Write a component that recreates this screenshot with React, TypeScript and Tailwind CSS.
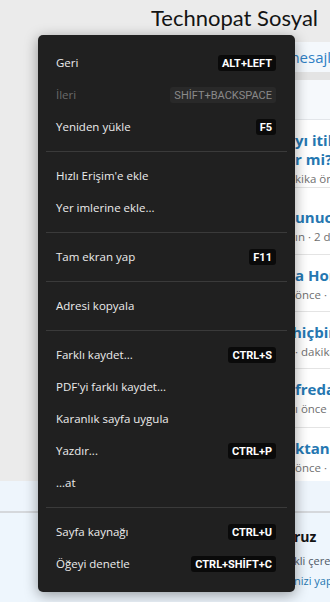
import React from "react";

type Item = { label: string; kbd?: string; disabled?: boolean } | "sep";

const items: Item[] = [
  { label: "Geri", kbd: "ALT+LEFT" },
  { label: "İleri", kbd: "SHİFT+BACKSPACE", disabled: true },
  { label: "Yeniden yükle", kbd: "F5" },
  "sep",
  { label: "Hızlı Erişim'e ekle" },
  { label: "Yer imlerine ekle..." },
  "sep",
  { label: "Tam ekran yap", kbd: "F11" },
  "sep",
  { label: "Adresi kopyala" },
  "sep",
  { label: "Farklı kaydet...", kbd: "CTRL+S" },
  { label: "PDF'yi farklı kaydet..." },
  { label: "Karanlık sayfa uygula" },
  { label: "Yazdır...", kbd: "CTRL+P" },
  { label: "...at" },
  "sep",
  { label: "Sayfa kaynağı", kbd: "CTRL+U" },
  { label: "Öğeyi denetle", kbd: "CTRL+SHİFT+C" },
];

function ContextMenu() {
  return (
    <div className="absolute left-[38px] top-[35px] w-[257px] rounded-[5px] bg-[#202020] py-[12px] shadow-[0_3px_14px_rgba(0,0,0,0.38)] font-['Open_Sans',sans-serif]">
      {items.map((it, i) =>
        it === "sep" ? (
          <div key={i} className="mx-[8px] my-[8px] h-px bg-[#3a3a3a]" />
        ) : (
          <div
            key={i}
            className="flex h-[32px] items-center justify-between pl-[18px] pr-[19px]"
          >
            <span
              className={
                "text-[11.5px] leading-none " +
                (it.disabled ? "text-[#6a6a6a]" : "text-[#ececec]")
              }
            >
              {it.label}
            </span>
            {it.kbd &&
              (it.disabled ? (
                <span className="flex h-[16px] items-center rounded-[3px] bg-[#292929] px-[4px] font-['Roboto',sans-serif] text-[11px] font-normal leading-none text-[#8a8a8a]">
                  {it.kbd}
                </span>
              ) : (
                <span className="flex h-[16px] items-center rounded-[3px] bg-[#0a0a0a] px-[4px] font-['Roboto',sans-serif] text-[11px] font-bold leading-none text-white">
                  {it.kbd}
                </span>
              ))}
          </div>
        )
      )}
    </div>
  );
}

function Title({ children }: { children: React.ReactNode }) {
  return (
    <p className="whitespace-nowrap pl-[255px] text-[15px] font-bold leading-[19px] text-[#2577b1]">
      {children}
    </p>
  );
}

function Meta({ children }: { children: React.ReactNode }) {
  return (
    <p className="mt-[2px] whitespace-nowrap pl-[255px] text-[11.5px] leading-[16px] text-[#6f6f6f]">
      {children}
    </p>
  );
}

export default function App() {
  return (
    <div className="relative h-[602px] w-[330px] overflow-hidden bg-[#ebebeb] font-['Open_Sans',sans-serif]">
      <div className="flex h-full flex-col">
        <div className="h-[42px] whitespace-nowrap pl-[151px] pt-[2px] font-['Lato',sans-serif] text-[22px] leading-[32px] text-[#141414]">
          Technopat Sosyal
        </div>
        <div className="ml-[40px] flex h-[439px] flex-col overflow-hidden">
          <div className="flex h-[30px] items-center whitespace-nowrap bg-[#f4f8fc] pl-[212px] text-[15px] text-[#2f80c4]">
            Yeni mesajlar
          </div>
          <div className="h-[8px] bg-[#e4e4e4]" />
          <div className="h-[40px] border-b border-[#e3e6ea] bg-[#f6f9fc]" />
          <div className="flex-1 bg-white">
            <div className="h-[68px] border-b border-[#e4e4e4] pt-[11px]">
              <Title>yı itiliyor</Title>
              <Title>r mi?</Title>
              <Meta>kika önce · Forum</Meta>
            </div>
            <div className="h-[67px] border-b border-[#e4e4e4] pt-[20px]">
              <Title>unucu</Title>
              <Meta>ın · 2 dakika</Meta>
            </div>
            <div className="h-[57px] border-b border-[#e4e4e4] pt-[11px]">
              <Title>a Honor</Title>
              <Meta>önce · Donanım</Meta>
            </div>
            <div className="h-[57px] border-b border-[#e4e4e4] pt-[11px]">
              <Title>
                <span className="-ml-[3px]">hiçbir</span>
              </Title>
              <Meta>· dakika önce</Meta>
            </div>
            <div className="h-[59px] border-b border-[#e4e4e4] pt-[11px]">
              <Title>fredan</Title>
              <Meta>ı önce · Oyun</Meta>
            </div>
            <div className="h-[53px] pt-[11px]">
              <Title>ktan sonra</Title>
              <Meta>
                önce · <span className="text-[#c0792e]">l</span>
              </Meta>
            </div>
          </div>
        </div>
        <div className="h-[32px] border-b-2 border-[#d5d8dc] bg-[#eef5fc]" />
        <div className="flex-1 bg-[#eef6fd] pl-[294px] pt-[14px] whitespace-nowrap">
          <p className="text-[14px] font-bold leading-[20px] text-[#141414]">ruz</p>
          <p className="mt-[6px] text-[11px] leading-[16px] text-[#4f5966]">kli çerezler</p>
          <p className="mt-[4px] text-[11px] leading-[16px] text-[#2577b1]">nizi yapılandırın</p>
        </div>
      </div>
      <ContextMenu />
    </div>
  );
}
